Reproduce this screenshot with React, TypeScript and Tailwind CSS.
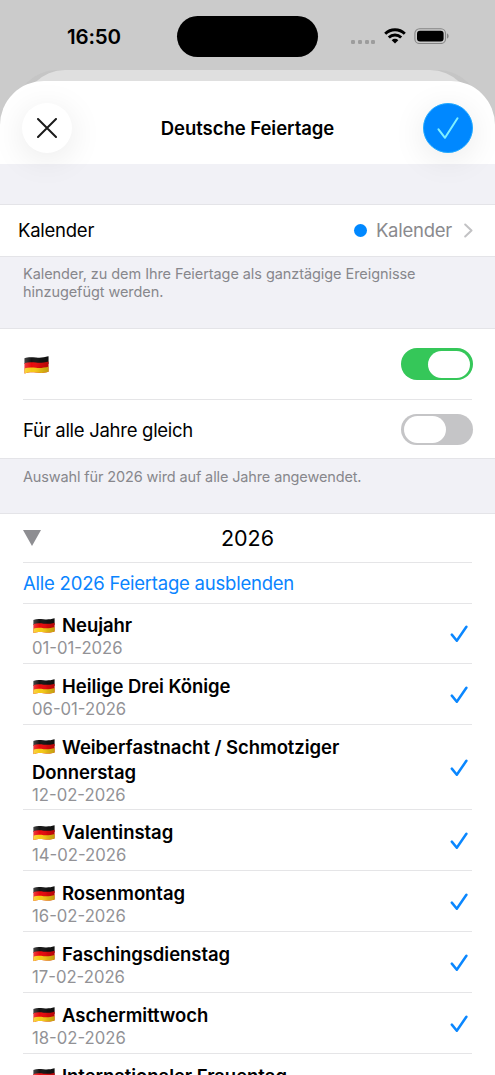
import React, { useState } from 'react';

interface Holiday {
  name: string;
  date: string;
  tall?: boolean;
}

const HOLIDAYS: Holiday[] = [
  { name: 'Neujahr', date: '01-01-2026' },
  { name: 'Heilige Drei Könige', date: '06-01-2026' },
  { name: 'Weiberfastnacht / Schmotziger Donnerstag', date: '12-02-2026', tall: true },
  { name: 'Valentinstag', date: '14-02-2026' },
  { name: 'Rosenmontag', date: '16-02-2026' },
  { name: 'Faschingsdienstag', date: '17-02-2026' },
  { name: 'Aschermittwoch', date: '18-02-2026' },
  { name: 'Internationaler Frauentag', date: '' },
];

const Flag: React.FC<{ className: string }> = ({ className }) => (
  <svg viewBox="0 0 25 18" preserveAspectRatio="none" className={className} aria-label="Deutschland">
    <defs>
      <clipPath id="flag-wave">
        <path d="M0.5 2.2C4 .9 7 1 12 1.5S20 1.5 24.5.3V15.8C20 17.2 17 17 12 16.5S4 16.4.5 17.6Z" />
      </clipPath>
      <linearGradient id="flag-shade">
        <stop offset="0" stopColor="#fff" stopOpacity=".22" />
        <stop offset=".3" stopColor="#fff" stopOpacity="0" />
        <stop offset=".65" stopColor="#000" stopOpacity=".1" />
        <stop offset="1" stopColor="#000" stopOpacity=".22" />
      </linearGradient>
    </defs>
    <g clipPath="url(#flag-wave)">
      <path fill="#151515" d="M0 0h25v8H0z" />
      <path fill="#e8090c" d="M0 7.3C4 5.9 8 6.1 12 6.6S20 6.6 25 5.4V18H0Z" />
      <path fill="#f6c915" d="M0 12.5C4 11.1 8 11.3 12 11.8S20 11.8 25 10.5V18H0Z" />
      <path fill="url(#flag-shade)" d="M0 0h25v18H0z" />
    </g>
  </svg>
);

const StatusBar: React.FC = () => (
  <div className="flex h-[70px] shrink-0 items-start">
    <span className="ml-[67px] mt-[24px] w-[110px] text-[20.5px] font-semibold leading-[26px] tracking-[-0.2px]">16:50</span>
    <div className="mt-4 h-[41px] w-[141px] rounded-full bg-black" />
    <div className="ml-[33px] mt-[40px] flex gap-[2.8px]">
      <i className="size-[4px] rounded-[1.2px] bg-[#9d9d9d]" />
      <i className="size-[4px] rounded-[1.2px] bg-[#9d9d9d]" />
      <i className="size-[4px] rounded-[1.2px] bg-[#9d9d9d]" />
      <i className="size-[4px] rounded-[1.2px] bg-[#9d9d9d]" />
    </div>
    <svg viewBox="0 0 22 16" className="ml-[8.8px] mt-[28px] h-[16px] w-[22px]" fill="none" stroke="#000" strokeWidth="2.9">
      <path d="M1.2 5.8a14 14 0 0 1 19.6 0" />
      <path d="M4.8 9.5a8.9 8.9 0 0 1 12.4 0" />
      <path d="M11 15.5 7.7 12.2a4.7 4.7 0 0 1 6.6 0Z" fill="#000" stroke="none" />
    </svg>
    <svg viewBox="0 0 35 16" className="ml-[7.5px] mt-[28px] h-[16px] w-[35px]">
      <rect x=".9" y=".7" width="30.6" height="14.8" rx="4.6" fill="none" stroke="#858585" strokeWidth="1.1" />
      <rect x="3" y="2.8" width="26.6" height="10.6" rx="3" fill="#000" />
      <path d="M33 5.6c1 .3 1.6 1.2 1.6 2.5s-.6 2.2-1.6 2.5Z" fill="#858585" />
    </svg>
  </div>
);

const Switch: React.FC<{ checked: boolean; onChange: () => void; label: string }> = ({ checked, onChange, label }) => (
  <button
    role="switch"
    aria-checked={checked}
    aria-label={label}
    onClick={onChange}
    className={`-mr-[0.5px] flex h-[31.5px] w-[71.5px] items-center rounded-full px-[2.5px] ${checked ? 'justify-end bg-[#35c759]' : 'justify-start bg-[#c5c5c7]'}`}
  >
    <span className="h-[27px] w-[42px] rounded-full bg-white" />
  </button>
);

const HolidayRow: React.FC<{ holiday: Holiday }> = ({ holiday }) => (
  <div
    className={`ml-[23px] mr-[23px] flex shrink-0 items-center border-b border-[#e5e5e7] pl-[9px] ${holiday.tall ? 'h-[85.4px]' : 'h-[60.8px]'}`}
  >
    <div className="w-[330px] pt-[6px]">
      <div className="text-[18.5px] font-semibold leading-[25px] tracking-[-0.05px]">
        <Flag className="mr-[7px] ml-[1px] inline-block h-[15.5px] w-[22px] align-[-1px]" />
        {holiday.name}
      </div>
      <div className="h-[21px] text-[16.7px] leading-[21px] text-[#929296]">{holiday.date}</div>
    </div>
    <svg viewBox="0 0 18 18" className="ml-auto mr-[4px] mt-[1.5px] size-[18px]" fill="none" stroke="#0a87ff" strokeWidth="2.5" strokeLinecap="round" strokeLinejoin="round">
      <path d="m1.8 9.6 5 6.2L16.4 1.8" />
    </svg>
  </div>
);

export default function App() {
  const [country, setCountry] = useState(true);
  const [sameYears, setSameYears] = useState(false);

  return (
    <div className="flex h-[1075px] w-[495px] flex-col overflow-hidden bg-[#cbcbcb] font-['Inter',sans-serif] text-black">
      <StatusBar />
      <div className="mx-[15px] -mb-[39px] h-[50px] shrink-0 rounded-t-[42px] bg-[#c5c5c5] px-[8px]">
        <div className="h-full rounded-t-[42px] bg-[#dfdfdf]" />
      </div>

      <div className="z-10 flex min-h-0 flex-1 flex-col overflow-hidden rounded-t-[44px] bg-white">
        <header className="z-10 flex h-[83px] shrink-0 items-center justify-between px-[22px] pt-[11px]">
          <button aria-label="Schließen" className="flex size-[50px] items-center justify-center rounded-full bg-white shadow-[0_6px_34px_rgba(0,0,0,0.09)]">
            <svg viewBox="0 0 20 20" className="size-[20px]" fill="none" stroke="#1a1a1a" strokeWidth="2" strokeLinecap="round">
              <path d="m1 1 18 18M19 1 1 19" />
            </svg>
          </button>
          <h1 className="pt-[2px] text-[18.5px] font-semibold tracking-[-0.05px]">Deutsche Feiertage</h1>
          <button aria-label="Fertig" className="flex size-[50px] items-center justify-center rounded-full border border-[#20a9ff] bg-[#0088ff] shadow-[0_6px_34px_rgba(0,0,0,0.09)]">
            <svg viewBox="0 0 22 22" className="size-[22px]" fill="none" stroke="#7ff0ff" strokeWidth="2" strokeLinecap="round" strokeLinejoin="round">
              <path d="m1.5 12.3 6.5 8.5L20.5 1.3" />
            </svg>
          </button>
        </header>

        <div className="h-[40px] shrink-0 bg-[#f1f1f6]" />

        <div className="flex h-[53px] shrink-0 items-center border-y border-[#e4e4e8] pl-[18px] pr-[22px] text-[18.5px] tracking-[-0.25px]">
          <span className="pt-[1px]">Kalender</span>
          <i className="ml-auto size-[13px] rounded-full bg-[#0088ff]" />
          <span className="ml-[9px] pt-[1px] text-[#8a8a8e]">Kalender</span>
          <svg viewBox="0 0 9 15" className="ml-[12px] h-[15px] w-[9px]" fill="none" stroke="#c2c2c4" strokeWidth="2" strokeLinecap="round" strokeLinejoin="round">
            <path d="m1.2 1.5 6.3 6-6.3 6" />
          </svg>
        </div>

        <p className="h-[71px] shrink-0 bg-[#f1f1f6] px-[23px] pt-[8px] text-[14.5px] leading-[18px] tracking-[-0.07px] text-[#87878c]">
          Kalender, zu dem Ihre Feiertage als ganztägige Ereignisse
          <br />
          hinzugefügt werden.
        </p>

        <section className="shrink-0 border-y border-[#e4e4e8]">
          <div className="mx-[23px] flex h-[71px] items-center justify-between border-b border-[#e5e5e7]">
            <Flag className="ml-[1px] mt-[1px] h-[18px] w-[25px]" />
            <Switch checked={country} onChange={() => setCountry(!country)} label="Deutschland" />
          </div>
          <div className="mx-[23px] flex h-[58px] items-center justify-between pt-[1px] text-[18.5px] tracking-[-0.28px]">
            <span className="pt-[2px]">Für alle Jahre gleich</span>
            <Switch checked={sameYears} onChange={() => setSameYears(!sameYears)} label="Für alle Jahre gleich" />
          </div>
        </section>

        <p className="h-[54px] shrink-0 bg-[#f1f1f6] px-[23px] pt-[9px] text-[14.5px] leading-[18px] tracking-[-0.13px] text-[#87878c]">
          Auswahl für 2026 wird auf alle Jahre angewendet.
        </p>

        <section className="flex flex-col border-t border-[#e4e4e8]">
          <div className="mx-[23px] flex h-[49px] shrink-0 items-center border-b border-[#e5e5e7]">
            <svg viewBox="0 0 18 16" className="size-[18px]">
              <path fill="#8e8e92" d="M0 0h18L9 16Z" />
            </svg>
            <span className="flex-1 pr-[18px] text-center text-[21.5px]">2026</span>
          </div>
          <button className="mx-[23px] flex h-[40.5px] shrink-0 items-center border-b border-[#e5e5e7] pt-[3px] text-[18.5px] tracking-[-0.22px] text-[#0a84ff]">
            Alle 2026 Feiertage ausblenden
          </button>
          {HOLIDAYS.map((holiday) => (
            <HolidayRow key={holiday.name} holiday={holiday} />
          ))}
        </section>
      </div>
    </div>
  );
}
